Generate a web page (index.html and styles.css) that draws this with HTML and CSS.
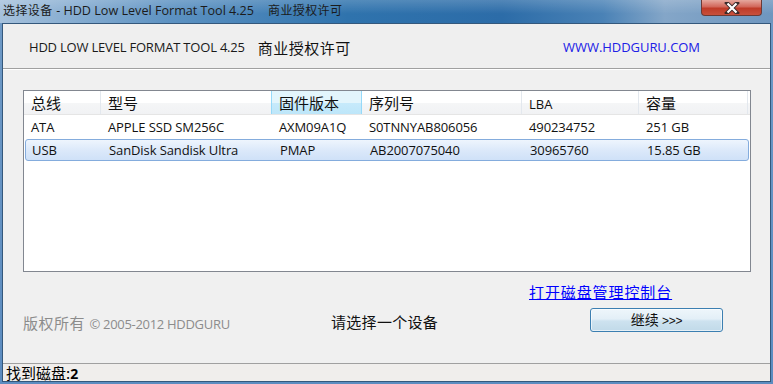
FILE: index.html
```html
<!DOCTYPE html>
<html>
  <head>
    <meta charset="utf-8" />
    <title>选择设备 - HDD Low Level Format Tool 4.25</title>
    <link rel="stylesheet" href="styles.css">
  </head>
  <body>
    <div class="window">
      <div class="titlebar">
        <span class="title">选择设备 <span class="latin">- HDD Low Level Format Tool 4.25</span><span class="gap"></span>商业授权许可</span>
        <div class="close">
          <svg width="16" height="12" viewBox="0 0 16 12">
            <path d="M3 1 L13 11 M13 1 L3 11" stroke="#3a2a2a" stroke-width="4" stroke-linecap="square" />
            <path d="M3.5 1.5 L12.5 10.5 M12.5 1.5 L3.5 10.5" stroke="#ffffff" stroke-width="2.2" />
          </svg>
        </div>
      </div>
      <div class="client">
        <div class="banner">
          <span class="product">HDD LOW LEVEL FORMAT TOOL 4.25</span>
          <span class="licence">商业授权许可</span>
          <a class="site" href="#">WWW.HDDGURU.COM</a>
        </div>
        <div class="main">
          <div class="list">
            <div class="row head">
              <div class="cell">总线</div>
              <div class="cell">型号</div>
              <div class="cell hot">固件版本</div>
              <div class="cell">序列号</div>
              <div class="cell">LBA</div>
              <div class="cell">容量</div>
            </div>
            <div class="row">
              <div class="cell">ATA</div>
              <div class="cell">APPLE SSD SM256C</div>
              <div class="cell">AXM09A1Q</div>
              <div class="cell">S0TNNYAB806056</div>
              <div class="cell">490234752</div>
              <div class="cell">251 GB</div>
            </div>
            <div class="row selected">
              <div class="cell">USB</div>
              <div class="cell">SanDisk Sandisk Ultra</div>
              <div class="cell">PMAP</div>
              <div class="cell">AB2007075040</div>
              <div class="cell">30965760</div>
              <div class="cell">15.85 GB</div>
            </div>
          </div>
          <div class="links">
            <a class="console" href="#">打开磁盘管理控制台</a>
          </div>
          <div class="footer">
            <span class="copyright">版权所有 <span class="latin">© 2005-2012 HDDGURU</span></span>
            <span class="prompt">请选择一个设备</span>
            <button class="next">继续 <span class="arrows">&gt;&gt;&gt;</span></button>
          </div>
        </div>
        <div class="status">找到磁盘:<b>2</b></div>
      </div>
    </div>
  </body>
</html>
```

FILE: styles.css
```css
html, body {
  margin: 0;
  padding: 0;
}
body {
  width: 773px;
  height: 384px;
  overflow: hidden;
  font-family: "Open Sans", "Noto Sans CJK SC", sans-serif;
}

.window {
  height: 384px;
  background: linear-gradient(to bottom, #6f9ac6, #5c8cc0);
  padding: 0 2px 0 2px;
  box-sizing: border-box;
}

/* title bar */
.titlebar {
  height: 23px;
  display: flex;
  justify-content: space-between;
  align-items: flex-start;
  margin: 0 -2px;
  background:
    linear-gradient(to bottom, rgba(255, 255, 255, 0.18), rgba(255, 255, 255, 0) 60%),
    linear-gradient(to right, #a6c1dc 0%, #5d92c2 22%, #2f73ad 45%, #2c6ca8 65%, #4a82b6 78%, #84a6c8 86%, #6e96bf 100%);
}
.title {
  font-size: 12px;
  line-height: 22px;
  color: #1b1b1b;
  padding-left: 3px;
  white-space: nowrap;
  letter-spacing: 0.4px;
}
.title .latin {
  font-size: 12.6px;
  letter-spacing: 0;
}
.title .gap {
  display: inline-block;
  width: 14px;
}
.close {
  width: 61px;
  height: 16px;
  margin-right: 11px;
  box-sizing: border-box;
  border: 1px solid #6b3a36;
  border-top: none;
  border-radius: 0 0 4px 4px;
  background: linear-gradient(to bottom, #e5a89e 0%, #d2675a 45%, #bf3b28 55%, #c8503c 100%);
  display: flex;
  justify-content: center;
  align-items: center;
}

/* client area */
.client {
  height: 357px;
  border: 1px solid #34587c;
  background: #f0f0f0;
  display: flex;
  flex-direction: column;
}

.banner {
  height: 45px;
  display: flex;
  align-items: center;
  border-bottom: 1px solid #a0a0a0;
  box-shadow: 0 1px 0 #ffffff;
  background: #efefef;
  padding-top: 2px;
  box-sizing: border-box;
}
.product {
  font-size: 13px;
  color: #1a1a1a;
  margin-left: 26px;
  letter-spacing: -0.2px;
}
.licence {
  font-size: 15px;
  color: #111;
  margin-left: 13px;
  letter-spacing: 0.5px;
}
.site {
  font-size: 13px;
  color: #2020e6;
  text-decoration: none;
  margin-left: auto;
  margin-right: 70px;
  letter-spacing: -0.05px;
}

.main {
  flex: 1;
  padding: 21px 0 0 20px;
}

/* device list */
.list {
  width: 728px;
  height: 182px;
  box-sizing: border-box;
  border: 1px solid #828790;
  background: #ffffff;
}
.row {
  display: grid;
  grid-template-columns: 77px 171px 90px 160px 117px 109px;
  height: 22px;
  align-items: center;
  font-size: 13px;
  letter-spacing: -0.1px;
  color: #111;
}
.row .cell {
  padding-left: 7px;
  white-space: nowrap;
}
.row.head {
  height: 23px;
  align-items: stretch;
  font-size: 15px;
  letter-spacing: 0;
  border-bottom: 1px solid #e5e5e5;
  background: linear-gradient(to bottom, #ffffff 0%, #ffffff 50%, #f5f6f7 51%, #f1f2f4 100%);
  margin-bottom: 1px;
}
.row.head .cell {
  display: flex;
  align-items: center;
  border-right: 1px solid #e3e8ee;
  font-family: "Noto Sans CJK SC", sans-serif;
}
.row.head .cell.hot {
  background: linear-gradient(to bottom, #e3f5fc 0%, #e3f5fc 50%, #c7eafb 51%, #bde6f9 100%);
  border-left: 1px solid #96d9f9;
  border-right: 1px solid #96d9f9;
  margin-left: -1px;
}
.row.head .cell:nth-child(5) {
  font-family: "Open Sans", sans-serif;
  font-size: 13px;
  padding-top: 3px;
}
.row.selected {
  margin: 1px 1px 0 1px;
  height: 22px;
  box-sizing: border-box;
  border: 1px solid #84acdd;
  border-radius: 3px;
  background: linear-gradient(to bottom, #eef5fd 0%, #dce9fa 50%, #cfe1f8 100%);
  grid-template-columns: 76px 171px 90px 160px 117px 108px;
}
.row.selected .cell:first-child {
  padding-left: 6px;
}

/* link and footer */
.links {
  display: flex;
  padding: 9px 0 0 506px;
  height: 22px;
}
.console {
  font-size: 15px;
  color: #0000ff;
  letter-spacing: 0.9px;
  font-family: "Noto Sans CJK SC", sans-serif;
}
.footer {
  display: flex;
  align-items: flex-start;
  margin-top: 2px;
}
.copyright {
  font-size: 15px;
  color: #8c8c8c;
  width: 308px;
  margin-top: 7px;
  letter-spacing: 0.5px;
}
.copyright .latin {
  font-size: 13px;
  letter-spacing: -0.3px;
}
.prompt {
  font-size: 15px;
  color: #111;
  margin-top: 6px;
  width: 259px;
  letter-spacing: 0.3px;
}
.next {
  width: 133px;
  height: 24px;
  margin-top: 3px;
  border: 1px solid #3c7fb1;
  border-radius: 3px;
  background: linear-gradient(to bottom, #eef6fb 0%, #e3eff7 45%, #cde2ef 55%, #c1dae9 100%);
  box-shadow: inset 0 0 0 1px rgba(255, 255, 255, 0.6);
  font-family: "Noto Sans CJK SC", sans-serif;
  font-size: 14px;
  color: #111;
  padding: 0;
  line-height: 20px;
}
.next .arrows {
  font-family: "Liberation Sans", sans-serif;
  font-size: 12px;
  letter-spacing: -0.3px;
}

/* status bar */
.status {
  height: 17px;
  border-top: 1px solid #a0a0a0;
  background: #f0eeec;
  font-family: "Noto Sans CJK SC", sans-serif;
  font-size: 15px;
  line-height: 17px;
  padding-left: 3px;
  color: #000;
}
.status b {
  font-family: "Open Sans", sans-serif;
  font-size: 14px;
}
```
